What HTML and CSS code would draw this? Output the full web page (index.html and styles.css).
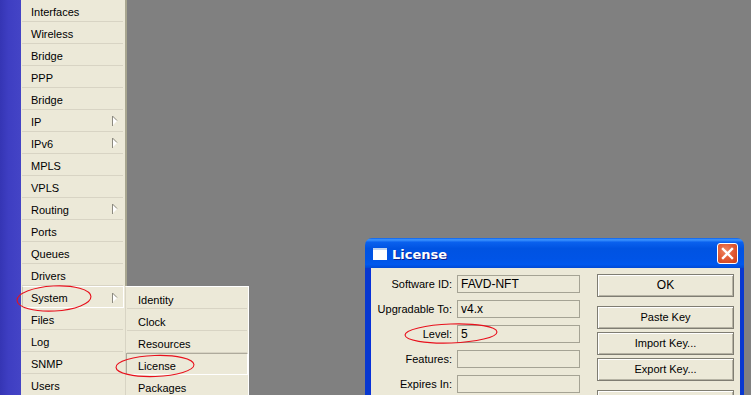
FILE: index.html
```html
<!DOCTYPE html>
<html>
<head>
<meta charset="utf-8">
<link rel="stylesheet" href="styles.css">
</head>
<body>
<div class="app">
  <nav class="sidebar">
    <div class="strip"></div>
    <ul class="menu">
      <li>Interfaces</li>
      <li>Wireless</li>
      <li>Bridge</li>
      <li>PPP</li>
      <li>Bridge</li>
      <li class="sub">IP<svg class="arrow" viewBox="0 0 7 12" width="7" height="12"><polygon points="1,1 1,11 6,6" fill="#fff"/><path d="M1.5 11V1L6 5.5" fill="none" stroke="#8c8a80" stroke-width="1"/></svg></li>
      <li class="sub">IPv6<svg class="arrow" viewBox="0 0 7 12" width="7" height="12"><polygon points="1,1 1,11 6,6" fill="#fff"/><path d="M1.5 11V1L6 5.5" fill="none" stroke="#8c8a80" stroke-width="1"/></svg></li>
      <li>MPLS</li>
      <li>VPLS</li>
      <li class="sub">Routing<svg class="arrow" viewBox="0 0 7 12" width="7" height="12"><polygon points="1,1 1,11 6,6" fill="#fff"/><path d="M1.5 11V1L6 5.5" fill="none" stroke="#8c8a80" stroke-width="1"/></svg></li>
      <li>Ports</li>
      <li>Queues</li>
      <li>Drivers</li>
      <li class="sub active">System<svg class="arrow" viewBox="0 0 7 12" width="7" height="12"><polygon points="1,1 1,11 6,6" fill="#fff"/><path d="M1.5 11V1L6 5.5" fill="none" stroke="#8c8a80" stroke-width="1"/></svg></li>
      <li>Files</li>
      <li>Log</li>
      <li>SNMP</li>
      <li>Users</li>
    </ul>
    <div class="edge"></div>
  </nav>
  <main class="desktop"></main>
</div>

<ul class="submenu">
  <li>Identity</li>
  <li>Clock</li>
  <li>Resources</li>
  <li class="active">License</li>
  <li>Packages</li>
</ul>

<div class="window">
  <div class="titlebar">
    <span class="ticon"></span>
    <span class="ttext">License</span>
    <span class="close"><svg viewBox="0 0 21 21" width="21" height="21"><path d="M6 6L15 15M15 6L6 15" stroke="#fff" stroke-width="2.4" stroke-linecap="square"/></svg></span>
  </div>
  <div class="wbody">
    <div class="fields">
      <label>Software ID:</label><div class="field">FAVD-NFT</div>
      <label>Upgradable To:</label><div class="field">v4.x</div>
      <label>Level:</label><div class="field">5</div>
      <label>Features:</label><div class="field"></div>
      <label>Expires In:</label><div class="field"></div>
    </div>
    <div class="buttons">
      <div class="btn ok">OK</div>
      <div class="btn paste">Paste Key</div>
      <div class="btn">Import Key...</div>
      <div class="btn">Export Key...</div>
      <div class="btn last"></div>
    </div>
  </div>
</div>

<svg class="marks" width="751" height="395" viewBox="0 0 751 395">
  <ellipse cx="54" cy="298.5" rx="37" ry="12.5" transform="rotate(-3 54 298.5)" fill="none" stroke="#e8101c" stroke-width="1.1"/>
  <ellipse cx="155" cy="366" rx="39" ry="10.5" transform="rotate(-2 155 366)" fill="none" stroke="#e8101c" stroke-width="1.1"/>
  <ellipse cx="451" cy="333.5" rx="46" ry="9.5" transform="rotate(-2 451 333.5)" fill="none" stroke="#e8101c" stroke-width="1.1"/>
</svg>
</body>
</html>
```
FILE: styles.css
```css
html, body {
  margin: 0;
  padding: 0;
  width: 751px;
  height: 395px;
  overflow: hidden;
  background: #808080;
  font-family: "Liberation Sans", Arial, sans-serif;
  font-size: 11px;
  color: #000;
}

.app {
  display: flex;
  height: 395px;
  overflow: hidden;
}

.sidebar {
  display: flex;
  height: 100%;
}

.strip {
  width: 21px;
  background: linear-gradient(90deg, #3535b4 0%, #3e3ec2 40%, #4444c6 100%);
}

.menu {
  list-style: none;
  margin: 0;
  padding: 0;
  width: 104px;
  background: #ece9d8;
  overflow: hidden;
}

.menu li {
  position: relative;
  height: 20px;
  padding-top: 1px;
  line-height: 22px;
  border-bottom: 1px solid #d8d4c4;
  margin-right: 2px;
  margin-left: 1px;
  padding-left: 9px;
}

.menu li.active {
  height: 20px;
  padding-top: 0;
  line-height: 22px;
  padding-left: 8px;
  border: 1px solid;
  border-color: #fff #fff #fff #c9c5b5;
  margin-right: 1px;
}

.arrow {
  position: absolute;
  right: 5px;
  top: 5px;
}

.menu li.active .arrow {
  top: 5px;
  right: 5px;
}

.edge {
  width: 2px;
  background: #a8a690;
}

.desktop {
  flex: 1;
  background: #808080;
}

.submenu {
  position: absolute;
  left: 125px;
  top: 286px;
  width: 122px;
  height: 109px;
  overflow: hidden;
  margin: 0;
  padding: 0;
  list-style: none;
  background: #ece9d8;
  border-top: 1px solid #fff;
  border-right: 1px solid #fff;
  border-left: 1px solid #d8d4c4;
}

.submenu li {
  height: 19px;
  padding-top: 2px;
  line-height: 22px;
  padding-left: 11px;
  border-bottom: 1px solid #d8d4c4;
  margin: 0 1px;
}

.submenu li.active {
  height: 19px;
  padding-top: 1px;
  line-height: 22px;
  border: 1px solid;
  border-color: #aeaa9c #fff #fff #aeaa9c;
  margin: 0;
  padding-left: 11px;
}

.window {
  position: absolute;
  left: 365px;
  top: 238px;
  width: 379px;
  height: 157px;
  overflow: hidden;
  display: flex;
  flex-direction: column;
}

.titlebar {
  flex-shrink: 0;
  height: 30px;
  display: flex;
  align-items: center;
  border-radius: 7px 7px 0 0;
  background: linear-gradient(180deg, #0a5ee8 0%, #3d95ff 6%, #0a61ee 14%, #0053e2 35%, #0054e6 70%, #0058ee 88%, #0049d5 100%);
  padding-left: 8px;
  padding-right: 6px;
}

.ticon {
  width: 14px;
  height: 12px;
  background: #fff;
  border-top: 2px solid #c2d4ee;
  box-sizing: border-box;
  margin-top: 1px;
}

.ttext {
  margin-left: 5px;
  margin-top: 3px;
  color: #fff;
  font-family: "DejaVu Sans", "Liberation Sans", sans-serif;
  font-weight: bold;
  font-size: 13px;
  text-shadow: 1px 1px 0 #0a1e8c;
}

.close {
  margin-left: auto;
  margin-top: 1px;
  width: 21px;
  height: 21px;
  box-sizing: border-box;
  border: 1px solid #fff;
  border-radius: 3px;
  background: radial-gradient(circle at 40% 35%, #ee8a66 0%, #e35d37 45%, #c93c16 100%);
  display: flex;
}

.close svg {
  margin: -1px;
}

.wbody {
  flex: 1;
  min-height: 0;
  overflow: hidden;
  display: flex;
  background: #ece9d8;
  border-left: 5px solid #0838d0;
  border-right: 4px solid #0838d0;
  box-shadow: inset 1px 0 0 #0831d9;
}

.fields {
  display: grid;
  grid-template-columns: 82px 123px;
  column-gap: 5px;
  row-gap: 7px;
  grid-auto-rows: 18px;
  padding-top: 7px;
  align-content: start;
}

.fields label {
  text-align: right;
  line-height: 18px;
  white-space: nowrap;
}

.field {
  box-sizing: border-box;
  border: 1px solid #a5a394;
  line-height: 16px;
  padding-left: 3px;
  font-size: 12px;
}

.buttons {
  margin-left: 17px;
  padding-top: 6px;
  width: 137px;
  display: flex;
  flex-direction: column;
  gap: 3px;
  flex-shrink: 0;
}

.btn {
  flex-shrink: 0;
  box-sizing: border-box;
  height: 23px;
  line-height: 21px;
  text-align: center;
  border: 1px solid #7f7d72;
  box-shadow: inset 1px 1px 0 #fff, inset -1px -1px 0 #b6b3a4;
  background: #ece9d8;
}

.btn.ok {
  margin-bottom: 6px;
  font-size: 12px;
}

.btn.last {
  margin-top: 6px;
}

.marks {
  position: absolute;
  left: 0;
  top: 0;
  pointer-events: none;
}
```
